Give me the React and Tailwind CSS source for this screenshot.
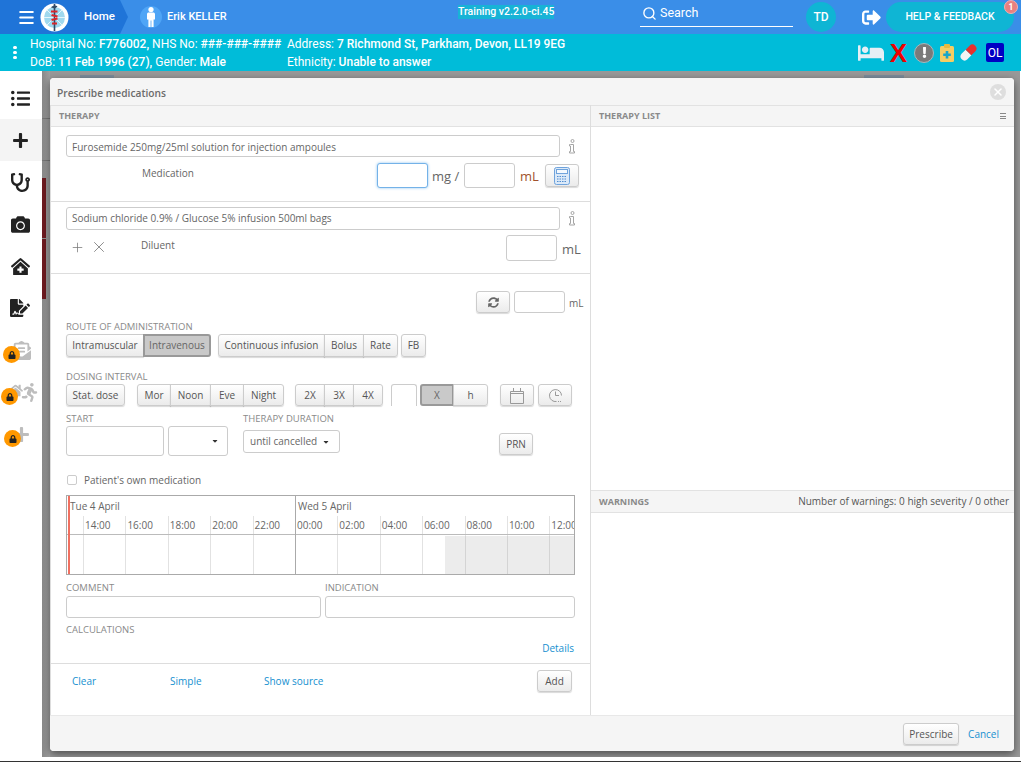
import { Menu, Search, Plus, X } from 'lucide-react';
import {
  FaBed, FaListUl, FaStethoscope, FaCamera, FaClinicMedical, FaFileSignature, FaHome,
  FaEnvelopeOpenText, FaRunning, FaPlus, FaLock, FaSignOutAlt, FaSyncAlt, FaExclamation, FaCaretDown,
} from 'react-icons/fa';

const btnBase = 'h-full flex items-center justify-center border border-[#ccc] bg-gradient-to-b from-white to-[#ebebeb] text-[#555] shadow-[0_1px_1px_rgba(0,0,0,0.15)]';
const btnOn = 'h-full flex items-center justify-center border-2 border-[#999] bg-[#c9c9c9] text-[#666]';
const inputBox = 'bg-white border border-[#ccc] rounded-[3px]';

const hours = ['14:00', '16:00', '18:00', '20:00', '22:00', '00:00', '02:00', '04:00', '06:00', '08:00', '10:00', '12:00'];

// ── small bits ──────────────────────────────────────────────
function Label({ children, className = '' }) {
  return <div className={`text-[9.5px] leading-[12px] uppercase text-[#8a8a8a] ${className}`}>{children}</div>;
}

function BtnGroup({ items, className = '' }) {
  return (
    <div className={`flex h-full ${className}`}>
      {items.map(([label, w, on], i) => (
        <button
          key={label}
          style={{ width: w }}
          className={`${on ? btnOn : btnBase} ${i === 0 ? 'rounded-l-[3px]' : '-ml-px'} ${i === items.length - 1 ? 'rounded-r-[3px]' : ''}`}
        >
          {label}
        </button>
      ))}
    </div>
  );
}

function InfoIcon() {
  return (
    <svg width="8" height="15" viewBox="0 0 8 15" fill="none" stroke="#a5a5a5" strokeWidth="1">
      <circle cx="4.5" cy="2" r="1.5" />
      <path d="M2.500 5.500h3v7h1V14H1.500v-1.500h1V7h-1V5.500z" />
    </svg>
  );
}

function Logo() {
  return (
    <svg width="29" height="29" viewBox="0 0 29 29">
      <circle cx="14.5" cy="14.5" r="14" fill="#fff" />
      <circle cx="14.5" cy="14.5" r="10.5" fill="#9fd8ee" />
      <path d="M14.500 4v21M4 14.500h21M7 7l15 15M22 7L7 22" stroke="#e4f5fb" strokeWidth="1" />
      <rect x="13.7" y="1" width="1.600" height="27" fill="#2f4a66" />
      <path d="M11 8.500h6.500M11.500 12l6 1.500M11.500 17l6-1.500M12 20.500h5" stroke="#d9252a" strokeWidth="2.200" />
      <path d="M11 4.500c2-2.500 5-2.500 6.500-1l-2.500 2z" fill="#2f4a66" />
    </svg>
  );
}

function Person() {
  return (
    <svg width="10" height="20" viewBox="0 0 10 20" fill="#fff">
      <circle cx="5" cy="2.6" r="2.6" />
      <path d="M1 7c0-1 .8-1.600 1.600-1.600h4.800C8.200 5.400 9 6 9 7v5.600H7.600V20H5.400v-6.600h-.8V20H2.400v-7.400H1z" />
    </svg>
  );
}

function ClipboardMed() {
  return (
    <svg width="14" height="18" viewBox="0 0 14 18">
      <rect x="0" y="2" width="14" height="16" rx="1.500" fill="#f5cd63" />
      <rect x="4" y="0" width="6" height="4" rx="1" fill="#e8b93f" />
      <path d="M5.700 7h2.600v2.500h2.500v2.600H8.300v2.500H5.700v-2.500H3.200V9.500h2.500z" fill="#19a6c9" />
    </svg>
  );
}

function Capsule() {
  return (
    <svg width="19" height="19" viewBox="0 0 19 19">
      <g transform="rotate(-45 9.500 9.500)">
        <path d="M9.500 5.500H4a4 4 0 0 0 0 8h5.500z" fill="#f3f3f3" />
        <path d="M9.500 5.500H15a4 4 0 0 1 0 8H9.500z" fill="#e8302c" />
      </g>
    </svg>
  );
}

function Calc() {
  return (
    <svg width="16" height="18" viewBox="0 0 16 18" fill="none" stroke="#6fa3dc">
      <rect x=".5" y=".5" width="15" height="17" rx="2" fill="#dbe9f8" />
      <rect x="2.500" y="2.500" width="11" height="4" fill="#f4f9fe" />
      <path d="M3 9.500h10M3 12h10M3 14.500h10" stroke="#4f8ccf" strokeDasharray="1.500 1" strokeWidth="1.200" />
    </svg>
  );
}

function Calendar() {
  return (
    <svg width="14" height="17" viewBox="0 0 14 17" fill="none" stroke="#999">
      <path d="M.5 4.500h13v12H.5zM.5 6.500h13M3.500 1v3M10.500 1v3" />
    </svg>
  );
}

function ClockDots() {
  return (
    <svg width="15" height="15" viewBox="0 0 15 15" fill="none" stroke="#999">
      <path d="M8.500 13.500A6 6 0 1 1 13.500 7.500M7.500 3.500v4h3.500" />
      <path d="M10 13.500h4" strokeDasharray="1 1" />
    </svg>
  );
}

function LockBadge({ className }) {
  return (
    <div className={`absolute w-[17px] h-[17px] rounded-full bg-[#ff9800] flex items-center justify-center ${className}`}>
      <FaLock className="text-[#222] text-[8px]" />
    </div>
  );
}

// ── top bars ────────────────────────────────────────────────
function TopBar() {
  return (
    <div className="relative h-[34px] shrink-0 bg-[#3a8ee8] flex items-center text-white font-['Roboto',sans-serif]">
      <div className="h-full w-[128px] shrink-0 bg-[#1f74d8] [clip-path:polygon(0_0,120px_0,128px_50%,120px_100%,0_100%)] flex items-center">
        <Menu size={19} strokeWidth={2.4} className="ml-[17px]" />
        <div className="ml-[4px]"><Logo /></div>
        <span className="ml-[15px] text-[11.5px] font-medium">Home</span>
      </div>
      <div className="ml-[12px] w-[22px] h-[22px] rounded-full bg-[#4fa5f6] flex items-center justify-center">
        <Person />
      </div>
      <span className="ml-[5px] w-[60px] whitespace-nowrap text-[11px] font-medium">Erik KELLER</span>
      <div className="ml-[231px] mb-[10px] bg-[#17b3d6] text-[10.5px] leading-[14px] text-center font-medium w-[96px] whitespace-nowrap">Training v2.2.0-ci.45</div>
      <div className="ml-[86px] w-[153px] h-[26px] mb-[7px] border-b border-white flex items-center">
        <Search size={15} strokeWidth={2.2} className="ml-[2px]" />
        <span className="ml-[3px] text-[12.5px]">Search</span>
      </div>
      <div className="ml-[13px] w-[30px] h-[30px] rounded-full bg-[#0fb5d4] flex items-center justify-center text-[12px] font-medium">TD</div>
      <FaSignOutAlt className="ml-[26px] text-[19px]" />
      <div className="ml-[5px] w-[128px] h-[30px] rounded-full bg-[#0fb5d4] flex items-center justify-center text-[10.5px] font-medium">HELP &amp; FEEDBACK</div>
      <div className="absolute right-[3px] top-0 w-[14px] h-[14px] rounded-full bg-[#e88080] border border-[#f2b0b0] flex items-center justify-center text-[8.5px] font-bold">1</div>
    </div>
  );
}

function PatientBar() {
  return (
    <div className="h-[37px] shrink-0 bg-[#00bcd9] flex items-center text-white text-[12px] leading-[18px] font-['Roboto',sans-serif]">
      <div className="w-[30px] flex flex-col items-center gap-[2px] pr-[1px]">
        <i className="w-[4px] h-[3px] rounded-full bg-white" />
        <i className="w-[4px] h-[3px] rounded-full bg-white" />
        <i className="w-[4px] h-[3px] rounded-full bg-white" />
      </div>
      <div className="w-[257px] whitespace-nowrap">
        <div>Hospital No: <b className="font-medium">F776002,</b> NHS No: <b className="font-medium">###-###-####</b></div>
        <div>DoB: <b className="font-medium">11 Feb 1996 (27),</b> Gender: <b className="font-medium">Male</b></div>
      </div>
      <div className="whitespace-nowrap">
        <div>Address: <b className="font-medium">7 Richmond St, Parkham, Devon, LL19 9EG</b></div>
        <div>Ethnicity: <b className="font-medium">Unable to answer</b></div>
      </div>
      <div className="ml-auto mr-[17px] flex items-center">
        <FaBed className="text-[#e6eff5] text-[26px]" />
        <span className="ml-[6px] text-[#f00000] text-[26px] leading-none font-bold font-['Liberation_Sans',sans-serif]">X</span>
        <div className="ml-[7px] w-[20px] h-[20px] rounded-full bg-[#7a7a7a] border border-[#a8b8bd] flex items-center justify-center">
          <FaExclamation className="text-white text-[11px]" />
        </div>
        <div className="ml-[6px]"><ClipboardMed /></div>
        <div className="ml-[5px]"><Capsule /></div>
        <div className="ml-[8px] w-[18px] h-[19px] rounded-[2px] bg-[#0000c4] flex items-center justify-center text-[12px]">OL</div>
      </div>
    </div>
  );
}

function Sidebar() {
  const row = 'relative h-[42px] flex items-center justify-center pr-[2px] text-[#222]';
  return (
    <div className="w-[42px] shrink-0 bg-white pt-[6px]">
      <div className={row}><FaListUl className="text-[19px]" /></div>
      <div className={`${row} bg-[#f4f4f4]`}><FaPlus className="text-[17px]" /></div>
      <div className={row}><FaStethoscope className="text-[19px]" /></div>
      <div className={row}><FaCamera className="text-[19px]" /></div>
      <div className={row}><FaClinicMedical className="text-[19px]" /></div>
      <div className={row}><FaFileSignature className="text-[20px]" /></div>
      <div className={`${row} text-[#bdbdbd]`}>
        <FaEnvelopeOpenText className="text-[19px] ml-[3px]" />
        <LockBadge className="left-[3px] top-[17px]" />
      </div>
      <div className={`${row} text-[#bdbdbd]`}>
        <FaHome className="text-[15px] ml-[6px] mb-[4px]" />
        <FaRunning className="text-[19px] -ml-[3px]" />
        <LockBadge className="left-[1px] top-[17px]" />
      </div>
      <div className={`${row} text-[#bdbdbd]`}>
        <FaPlus className="text-[17px] ml-[3px]" />
        <LockBadge className="left-[4px] top-[17px]" />
      </div>
    </div>
  );
}

// ── modal parts ─────────────────────────────────────────────
function Timeline() {
  return (
    <div className="relative h-[80px] border border-[#aaa] overflow-hidden text-[10px] text-[#666]">
      <div className="h-[20px] flex leading-[20px]">
        <div className="w-[229px] pl-[3px] border-r border-[#aaa] h-[200px]">Tue 4 April</div>
        <div className="pl-[2px]">Wed 5 April</div>
      </div>
      <div className="flex h-[19px] border-b border-[#bbb] leading-[19px]">
        <div className="w-[17px] shrink-0 border-r border-[#e2e2e2]" />
        {hours.map(h => (
          <div key={h} className={`w-[42.4px] shrink-0 pl-[1px] border-r ${h === '22:00' ? 'border-[#aaa]' : 'border-[#e2e2e2]'}`}>{h}</div>
        ))}
      </div>
      <div className="flex h-[39px]">
        <div className="w-[17px] shrink-0 border-r border-[#e2e2e2]" />
        {hours.map(h => (
          <div key={h} className={`w-[42.4px] shrink-0 border-r ${h === '22:00' ? 'border-[#aaa]' : 'border-[#e2e2e2]'}`} />
        ))}
      </div>
      <div className="absolute left-[378px] right-0 bottom-0 h-[38px] bg-[#a0a0a0]/20" />
      <div className="absolute left-[1px] top-0 bottom-0 w-[2px] bg-[#f07060]" />
    </div>
  );
}

function TherapyPanel() {
  return (
    <div className="w-[540px] shrink-0 border-r border-[#ddd] flex flex-col text-[10px] text-[#666]">
      <div className="h-[22px] shrink-0 bg-[#f5f5f5] border-y border-[#e2e2e2] pl-[8px] text-[9px] leading-[20px] font-bold text-[#8a8a8a]">THERAPY</div>

      <div className="h-[75px] shrink-0 border-b border-[#ddd] pl-[15px] pt-[8px]">
        <div className="flex items-center">
          <div className={`${inputBox} w-[494px] h-[22px] pl-[5px] leading-[22px]`}>Furosemide 250mg/25ml solution for injection ampoules</div>
          <div className="ml-[8px]"><InfoIcon /></div>
        </div>
        <div className="flex h-[25px] mt-[6px]">
          <span className="ml-[76px] w-[235px] mt-[3px]">Medication</span>
          <div className="w-[51px] h-[25px] bg-white border border-[#74b2e8] rounded-[3px] shadow-[0_0_3px_#8fc4f0]" />
          <span className="ml-[4px] w-[32px] text-[13px] leading-[26px] whitespace-nowrap">mg /</span>
          <div className={`${inputBox} w-[51px] h-[25px]`} />
          <span className="ml-[5px] w-[25px] text-[13px] leading-[26px] text-[#a0522d]">mL</span>
          <button className={`${btnBase} rounded-[3px] w-[34px] !h-[23px] mt-[1px]`}><Calc /></button>
        </div>
      </div>

      <div className="h-[72px] shrink-0 border-b border-[#ddd] pl-[15px] pt-[5px]">
        <div className="flex items-center">
          <div className={`${inputBox} w-[494px] h-[23px] pl-[5px] leading-[21px]`}>Sodium chloride 0.9% / Glucose 5% infusion 500ml bags</div>
          <div className="ml-[8px]"><InfoIcon /></div>
        </div>
        <div className="flex h-[26px] mt-[5px]">
          <Plus size={15} strokeWidth={1.2} className="ml-[4px] mt-[5px] text-[#777]" />
          <X size={18} strokeWidth={1.1} className="ml-[5px] mt-[3px] text-[#777]" />
          <span className="ml-[33px] w-[365px] mt-[3px]">Diluent</span>
          <div className={`${inputBox} w-[51px] h-[26px]`} />
          <span className="ml-[5px] text-[13px] leading-[28px]">mL</span>
        </div>
      </div>

      <div className="flex-1 pl-[15px] relative">
        <div className="flex h-[22px] mt-[17px]">
          <button className={`${btnBase} rounded-[3px] w-[34px] ml-[410px]`}><FaSyncAlt className="text-[#666] text-[11px]" /></button>
          <div className={`${inputBox} w-[51px] h-[22px] ml-[4px]`} />
          <span className="ml-[4px] leading-[24px]">mL</span>
        </div>

        <Label className="mt-[8px]">Route of administration</Label>
        <div className="flex h-[23px] mt-[1px]">
          <BtnGroup items={[['Intramuscular', 78], ['Intravenous', 68, true]]} />
          <BtnGroup className="ml-[7px]" items={[['Continuous infusion', 107], ['Bolus', 40], ['Rate', 35]]} />
          <BtnGroup className="ml-[3px]" items={[['FB', 25]]} />
        </div>

        <Label className="mt-[14px]">Dosing interval</Label>
        <div className="flex h-[22px] mt-[1px]">
          <BtnGroup items={[['Stat. dose', 59]]} />
          <BtnGroup className="ml-[12px]" items={[['Mor', 34], ['Noon', 41], ['Eve', 34], ['Night', 41]]} />
          <BtnGroup className="ml-[11px]" items={[['2X', 30], ['3X', 30], ['4X', 30]]} />
          <div className="ml-[8px] w-[26px] h-[22px] bg-white border border-b-0 border-[#ccc] rounded-t-[3px]" />
          <BtnGroup className="ml-[3px]" items={[['X', 34, true], ['h', 35]]} />
          <button className={`${btnBase} rounded-[3px] w-[34px] ml-[12px]`}><Calendar /></button>
          <button className={`${btnBase} rounded-[3px] w-[34px] ml-[4px]`}><ClockDots /></button>
        </div>

        <div className="flex mt-[7px]">
          <div>
            <Label>Start</Label>
            <div className="flex mt-[1px]">
              <div className={`${inputBox} w-[98px] h-[30px]`} />
              <div className={`${inputBox} w-[60px] h-[30px] ml-[4px] flex items-center justify-end pr-[8px]`}><FaCaretDown className="text-[#333] text-[8px]" /></div>
            </div>
          </div>
          <div className="ml-[15px]">
            <Label>Therapy duration</Label>
            <div className={`${inputBox} w-[97px] h-[23px] mt-[5px] flex items-center pl-[6px]`}>
              until cancelled
              <FaCaretDown className="ml-[5px] text-[#333] text-[8px]" />
            </div>
          </div>
          <button className={`${btnBase} rounded-[3px] !h-[22px] w-[34px] ml-[159px] mt-[20px]`}>PRN</button>
        </div>

        <div className="flex items-center mt-[17px] h-[14px]">
          <div className="w-[10px] h-[10px] ml-[1px] border border-[#ccc] rounded-[2px] bg-white" />
          <span className="ml-[7px]">Patient's own medication</span>
        </div>

        <div className="w-[509px] mt-[8px]"><Timeline /></div>

        <div className="flex gap-[4px] w-[509px] mt-[7px]">
          <div className="w-[255px]">
            <Label>Comment</Label>
            <div className={`${inputBox} h-[22px] mt-[2px]`} />
          </div>
          <div className="w-[250px]">
            <Label>Indication</Label>
            <div className={`${inputBox} h-[22px] mt-[2px]`} />
          </div>
        </div>

        <Label className="mt-[6px]">Calculations</Label>
        <div className="w-[508px] text-right text-[#1590d0] mt-[5px] leading-[14px]">Details</div>

        <div className="absolute left-0 right-0 top-[389px] border-t border-[#ddd] h-[52px] flex items-start text-[#1590d0]">
          <span className="ml-[21px] mt-[10px] w-[98px]">Clear</span>
          <span className="mt-[10px] w-[94px]">Simple</span>
          <span className="mt-[10px]">Show source</span>
          <button className={`${btnBase} rounded-[3px] !h-[22px] w-[35px] absolute left-[486px] top-[6px]`}>Add</button>
        </div>
      </div>
    </div>
  );
}

function RightPanel() {
  return (
    <div className="flex-1 flex flex-col text-[10px] text-[#666]">
      <div className="h-[22px] shrink-0 bg-[#f5f5f5] border-y border-[#e2e2e2] px-[8px] text-[9px] leading-[20px] font-bold text-[#8a8a8a] flex items-center justify-between">
        THERAPY LIST
        <span className="flex flex-col gap-[1.500px]">
          <i className="block w-[6px] h-px bg-[#888]" />
          <i className="block w-[6px] h-px bg-[#888]" />
          <i className="block w-[6px] h-px bg-[#888]" />
        </span>
      </div>
      <div className="h-[363px] shrink-0" />
      <div className="h-[23px] shrink-0 bg-[#f5f5f5] border-y border-[#e2e2e2] pl-[8px] pr-[5px] flex items-center justify-between">
        <span className="text-[9px] font-bold text-[#8a8a8a]">WARNINGS</span>
        <span className="text-[#555]">Number of warnings: 0 high severity / 0 other</span>
      </div>
      <div className="flex-1" />
    </div>
  );
}

function PrescribeModal() {
  return (
    <div className="absolute left-[8px] top-[7px] w-[964px] h-[673px] rounded-[4px] bg-white shadow-[0_3px_8px_rgba(0,0,0,0.5)] flex flex-col overflow-hidden font-['Open_Sans',sans-serif]">
      <div className="h-[27px] shrink-0 bg-[#f5f5f5] flex items-center justify-between pl-[7px] pr-[8px] pt-[4px]">
        <span className="text-[10.2px] font-semibold text-[#6b6b6b]">Prescribe medications</span>
        <div className="w-[16px] h-[16px] rounded-full bg-[#dedede] flex items-center justify-center mb-[4px]">
          <X size={12} strokeWidth={3} className="text-white" />
        </div>
      </div>
      <div className="flex-1 flex min-h-0 border-l border-[#ddd]">
        <TherapyPanel />
        <RightPanel />
      </div>
      <div className="h-[36px] shrink-0 bg-[#f5f5f5] border-t border-[#e8e8e8] flex items-center justify-end text-[10px] pt-[1px]">
        <button className={`${btnBase} rounded-[3px] !h-[22px] w-[56px]`}>Prescribe</button>
        <span className="ml-[9px] mr-[15px] text-[#1590d0]">Cancel</span>
      </div>
    </div>
  );
}

// page behind the modal, only slivers of it show
function Backdrop() {
  return (
    <div className="relative flex-1 mr-px bg-[#999] overflow-hidden">
      <div className="absolute left-0 top-0 bottom-0 w-[8px] bg-gradient-to-r from-[#8a8a8a] to-[#a0a0a0]" />
      <div className="absolute left-[38px] top-[4px] w-[34px] h-[3px] bg-[#7d8d9c]" />
      <div className="absolute left-[822px] top-[4px] w-[40px] h-[3px] bg-[#7d8d9c]" />
      <div className="absolute left-0 top-[47px] w-[8px] h-px bg-[#777]" />
      <div className="absolute left-0 top-[89px] w-[8px] h-px bg-[#777]" />
      <div className="absolute left-0 top-[107px] w-[4px] h-[60px] bg-[#6d1a20]" />
      <div className="absolute left-0 top-[168px] w-[4px] h-[60px] bg-[#6d1a20]" />
      <PrescribeModal />
    </div>
  );
}

export default function App() {
  return (
    <div className="w-[1021px] h-[762px] overflow-hidden bg-white flex flex-col">
      <TopBar />
      <PatientBar />
      <div className="flex flex-1 min-h-0 pb-[4px]">
        <Sidebar />
        <Backdrop />
      </div>
      <div className="h-px shrink-0 bg-[#333]" />
    </div>
  );
}
